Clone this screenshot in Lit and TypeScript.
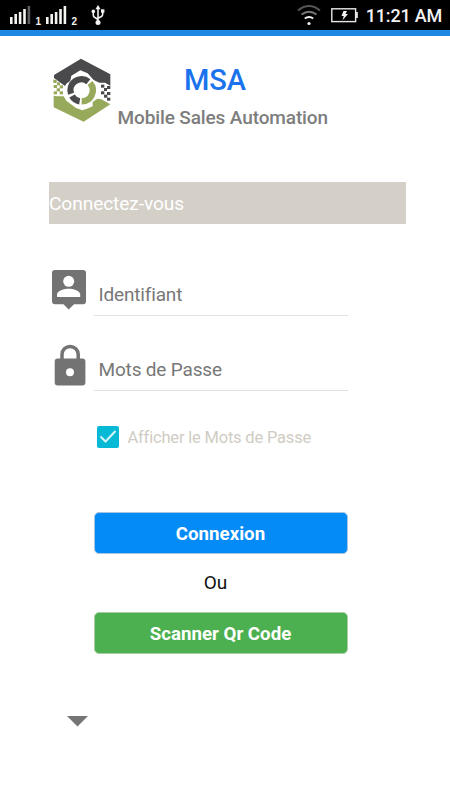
import { LitElement, html, css, svg } from "lit";
import { customElement, property } from "lit/decorators.js";

const bars = (heights: number[], dimFrom: number) =>
  heights.map((h, i) => svg`<rect x=${i * 4.4} y=${18 - h} width="2.6" height=${h} fill=${i >= dimFrom ? "#5c5c5c" : "#f4f4f0"} />`);

@customElement("status-bar")
class StatusBar extends LitElement {
  static styles = css`
    :host { display: flex; align-items: flex-start; height: 30px; background: #000; color: #f2f2f2;
      border-bottom: 6px solid #1e88e5; font-family: Roboto, sans-serif; }
    svg { display: block; flex: none; }
    .signal { margin: 6px 0 0 10px; }
    .sim { font: bold 10px/12px "Liberation Sans", sans-serif; margin: 16px 0 0 3.5px; width: 6px; }
    .second { margin-left: 4.5px; }
    .usb { margin: 5px 0 0 13px; }
    .right { display: flex; margin-left: auto; }
    .wifi { margin: 5px 0 0; }
    .battery { margin: 8px 0 0 10px; }
    .time { font-size: 18px; line-height: 22px; font-weight: 500; letter-spacing: -.2px; margin: 5px 8px 0 8px; white-space: nowrap; }
  `;
  render() {
    return html`
      <svg class="signal" width="22" height="18">${bars([7, 10, 12, 15, 18], 4)}</svg>
      <span class="sim">1</span>
      <svg class="signal second" width="22" height="18">${bars([7, 10, 12, 15, 18], 5)}</svg>
      <span class="sim">2</span>
      <svg class="usb" width="14" height="21" viewBox="0 0 14 21" fill="none" stroke="#f2f2f2" stroke-width="1.6">
        <path d="M7 3V18M2.3 6.500V10.300Q2.300 12 4 12.500L7 14.500M11.700 6V9.300Q11.700 11 10 11.700L7 13.300" />
        <path d="M7 0L9.600 4.300H4.400Z" fill="#f2f2f2" stroke="none" />
        <circle cx="7" cy="17.600" r="2.500" fill="#f2f2f2" stroke="none" />
        <circle cx="2.300" cy="6.400" r="1.800" fill="#f2f2f2" stroke="none" />
        <path d="M10 4.300H13.400V7.700H10Z" fill="#f2f2f2" stroke="none" />
      </svg>
      <div class="right">
        <svg class="wifi" width="24" height="22" viewBox="0 0 24 22" fill="none" stroke-width="2">
          <path d="M1 5.500Q12-3.500 23 5.500" stroke="#555" />
          <path d="M4.500 9.500Q12 4 19.500 9.500" stroke="#777" />
          <path d="M7.800 13.500Q12 10.500 16.200 13.500" stroke="#f4f4f4" />
          <circle cx="12" cy="18.500" r="1.600" fill="#f4f4f4" />
        </svg>
        <svg class="battery" width="27" height="15" viewBox="0 0 27 15">
          <rect x=".8" y=".8" width="23.800" height="12.800" fill="none" stroke="#e8e8e8" stroke-width="1.400" />
          <rect x="24.800" y="4" width="2" height="6" fill="#e8e8e8" />
          <path d="M12.500 3H16L14.500 6H17L11.500 12.300L12.800 8H10.500Z" fill="#f4f4f4" />
        </svg>
        <span class="time">11:21 AM</span>
      </div>`;
  }
}

@customElement("brand-logo")
class BrandLogo extends LitElement {
  static styles = css`:host { display: block; } svg { display: block; }`;
  render() {
    return html`<svg width="75" height="80" viewBox="0 0 225 240">
      <path fill="#4a4a4c" d="M108 26L196 73V107L180 98H163L146 90L128 70L106 61L79 77L76 92L64 101L60 108L27 84V75Z" />
      <path fill="#97a95a" d="M26 137L38 139L56 139L64 152L93 174L112 181L124 177L143 169L143 156L157 146L169 148L196 163L116 215L26 172Z" />
      <g fill="none" stroke-width="19">
        <path stroke="#4a4a4c" d="M78 131A33 33 0 0 1 130 95" />
        <path stroke="#4a4a4c" d="M81 138A33 33 0 0 0 104 154" />
        <path stroke="#97a95a" d="M135 99A33 33 0 0 1 110 154" />
      </g>
      <g fill="#97a95a">
        <rect x="25" y="89" width="10" height="10" /><rect x="36" y="97" width="9" height="9" />
        <rect x="26" y="105" width="10" height="9" /><rect x="44" y="106" width="10" height="9" />
        <rect x="35" y="115" width="10" height="9" /><rect x="26" y="124" width="10" height="9" />
        <rect x="44" y="124" width="10" height="9" />
      </g>
      <g fill="#4a4a4c">
        <rect x="168" y="104" width="10" height="9" /><rect x="186" y="108" width="10" height="9" />
        <rect x="177" y="114" width="9" height="9" /><rect x="168" y="124" width="10" height="9" />
        <rect x="186" y="126" width="10" height="9" /><rect x="177" y="134" width="10" height="9" />
        <rect x="186" y="143" width="10" height="9" />
      </g>
    </svg>`;
  }
}

@customElement("login-field")
class LoginField extends LitElement {
  @property() label = "";
  @property() kind = "user";
  static styles = css`
    :host { display: flex; height: 50px; font-family: Roboto, sans-serif; }
    svg { display: block; flex: none; width: 45px; height: 50px; }
    .line { box-sizing: border-box; width: 254px; height: 50px; border-bottom: 1px solid #e2e2e2;
      padding: 17px 0 0 4.5px; color: #777; font-size: 19px; letter-spacing: -.17px; line-height: 24px; white-space: nowrap; }
  `;
  render() {
    const icon = this.kind === "user"
      ? svg`<path fill="#737373" d="M6 4H34Q37 4 37 7V35Q37 38.300 34 38.300H25L19.700 43.500L14.500 38.300H6Q3 38.300 3 35V7Q3 4 6 4Z" />
          <circle cx="19.700" cy="15.300" r="5.500" fill="#fff" />
          <path fill="#fff" d="M8 31V28.500C8 24.800 15.500 22.800 19.700 22.800S31.200 24.800 31.200 28.500V31Z" />`
      : svg`<rect x="5.700" y="17.500" width="30.700" height="27" rx="3" fill="#737373" />
          <path d="M13 18V13.500A8.100 8 0 0 1 29.200 13.500V18" fill="none" stroke="#737373" stroke-width="3.500" />
          <circle cx="21" cy="31.300" r="4" fill="#fff" />`;
    return html`<svg viewBox="0 0 45 50">${icon}</svg><div class="line">${this.label}</div>`;
  }
}

@customElement("app-root")
class AppRoot extends LitElement {
  static styles = css`
    :host { display: block; height: 800px; overflow: hidden; background: #fff; font-family: Roboto, "Liberation Sans", sans-serif; }
    .header { display: flex; padding: 14px 0 0 45px; height: 80px; }
    .titles { margin-left: -2.5px; width: 213px; }
    .title { margin: 13px 0 0; padding-right: 18px; color: #1a73ec; font-size: 29px; line-height: 34px; font-weight: 500; text-align: center; }
    .subtitle { margin: 10px 0 0; color: #7d7d7d; font-size: 19px; letter-spacing: -.12px; line-height: 22px; font-weight: 500; white-space: nowrap; }
    .banner { box-sizing: border-box; margin: 52px 0 0 49px; width: 357px; height: 42px; background: #d4cfc7; color: #fff; font-size: 19.200px; letter-spacing: -.12px; line-height: 43px; }
    .form { margin: 42px 0 0 49px; display: flex; flex-direction: column; gap: 25px; }
    .check { display: flex; align-items: center; margin: 34px 0 0 97px; height: 23px; gap: 8.500px; color: #d0ccc4; font-size: 16.500px; letter-spacing: -.19px; line-height: 24px; white-space: nowrap; }
    .check svg { flex: none; }
    .check span { padding-top: 2px; }
    .actions { margin: 64px 0 0 93.500px; width: 254px; }
    .button { box-sizing: border-box; display: block; width: 254px; height: 42px; border: 1px solid #a9c4e0; border-radius: 5px; background: #058bf6;
      color: #fff; font: bold 18.700px/38px Roboto, sans-serif; padding: 2px 0 0; text-align: center; }
    .green { background: #4caf50; border-color: #a9cda9; }
    .or { height: 58px; line-height: 57px; padding-right: 10px; text-align: center; font-size: 19px; color: #111; }
    .arrow { display: block; margin: 62px 0 0 67px; }
  `;
  render() {
    return html`
      <status-bar></status-bar>
      <div class="header">
        <brand-logo></brand-logo>
        <div class="titles"><h1 class="title">MSA</h1><p class="subtitle">Mobile Sales Automation</p></div>
      </div>
      <div class="banner">Connectez-vous</div>
      <div class="form">
        <login-field kind="user" label="Identifiant"></login-field>
        <login-field kind="lock" label="Mots de Passe"></login-field>
      </div>
      <div class="check">
        <svg width="22" height="22" viewBox="0 0 22 22"><rect width="22" height="22" rx="2" fill="#08b9d6" /><path d="M3.500 10.500L8.500 15.500L18.500 5" fill="none" stroke="#d8f5f9" stroke-width="2" /></svg>
        <span>Afficher le Mots de Passe</span>
      </div>
      <div class="actions">
        <button class="button">Connexion</button>
        <div class="or">Ou</div>
        <button class="button green">Scanner Qr Code</button>
      </div>
      <svg class="arrow" width="21" height="11"><path d="M0 0H21L10.500 10.500Z" fill="#757575" /></svg>`;
  }
}
